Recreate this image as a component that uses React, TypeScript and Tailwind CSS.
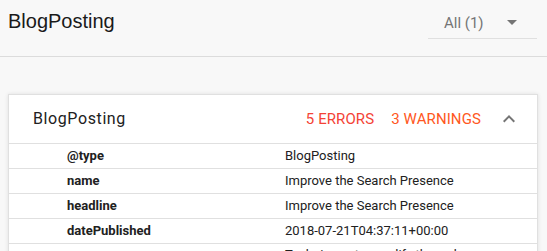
import React from "react";

const rows: { k: string; v: React.ReactNode; tall?: boolean }[] = [
  { k: "@type", v: "BlogPosting" },
  { k: "name", v: "Improve the Search Presence" },
  { k: "headline", v: "Improve the Search Presence" },
  { k: "datePublished", v: "2018-07-21T04:37:11+00:00" },
  {
    k: "description",
    v: "Techniques to amplify the web presence and get better search visibility for your content",
    tall: true,
  },
];

export default function App() {
  return (
    <div
      className="w-[547px] h-[251px] overflow-hidden bg-[#f8f8f8] text-[#212121]"
      style={{ fontFamily: "Roboto, 'Liberation Sans', sans-serif" }}
    >
      <div className="h-[57px] border-b border-[#dcdcdc] flex justify-between items-start pl-2 pr-[10px]">
        <div
          className="pt-[9px] text-[20px] leading-[24px] text-[#1a1a1a]"
          style={{ fontFamily: "'Liberation Sans', Arial, sans-serif" }}
        >
          BlogPosting
        </div>
        <div className="w-[109px] h-[39px] border-b border-[#e0e0e0] pt-[14px] pl-4 flex items-start">
          <span className="text-[15px] leading-[18px] text-[#757575]">All (1)</span>
          <svg
            width="24"
            height="24"
            viewBox="0 0 24 24"
            className="ml-4 -mt-[4px]"
            fill="#757575"
          >
            <path d="M7 10l5 5 5-5z" />
          </svg>
        </div>
      </div>
      <div className="pt-[37px] pl-2">
        <div className="w-[530px] bg-white border border-[#e0e0e0] shadow-[0_0_4px_rgba(0,0,0,0.10)]">
          <div className="h-[49px] border-b border-[#e0e0e0] flex items-center pl-6 pr-4">
            <div className="flex-1 text-[16px] tracking-[0.6px] text-[#212121]">BlogPosting</div>
            <span className="text-[15px] tracking-[0.1px] text-[#f44336]">5 ERRORS</span>
            <span className="ml-[17px] text-[15px] tracking-[0.1px] text-[#ff5722]">3 WARNINGS</span>
            <svg width="24" height="24" viewBox="0 0 24 24" className="ml-4" fill="#757575">
              <path d="M7.41 15.41L12 10.83l4.59 4.58L18 14l-6-6-6 6z" />
            </svg>
          </div>
          {rows.map((r) => (
            <div
              key={r.k}
              className={`flex items-center border-b border-[#e0e0e0] text-[13px] ${r.tall ? "pt-[2px] pb-[4px]" : "h-[25px]"}`}
            >
              <div className="w-[276px] pl-[58px] font-bold">{r.k}</div>
              <div className="flex-1 pr-6 leading-[18px]">{r.v}</div>
            </div>
          ))}
        </div>
      </div>
    </div>
  );
}
